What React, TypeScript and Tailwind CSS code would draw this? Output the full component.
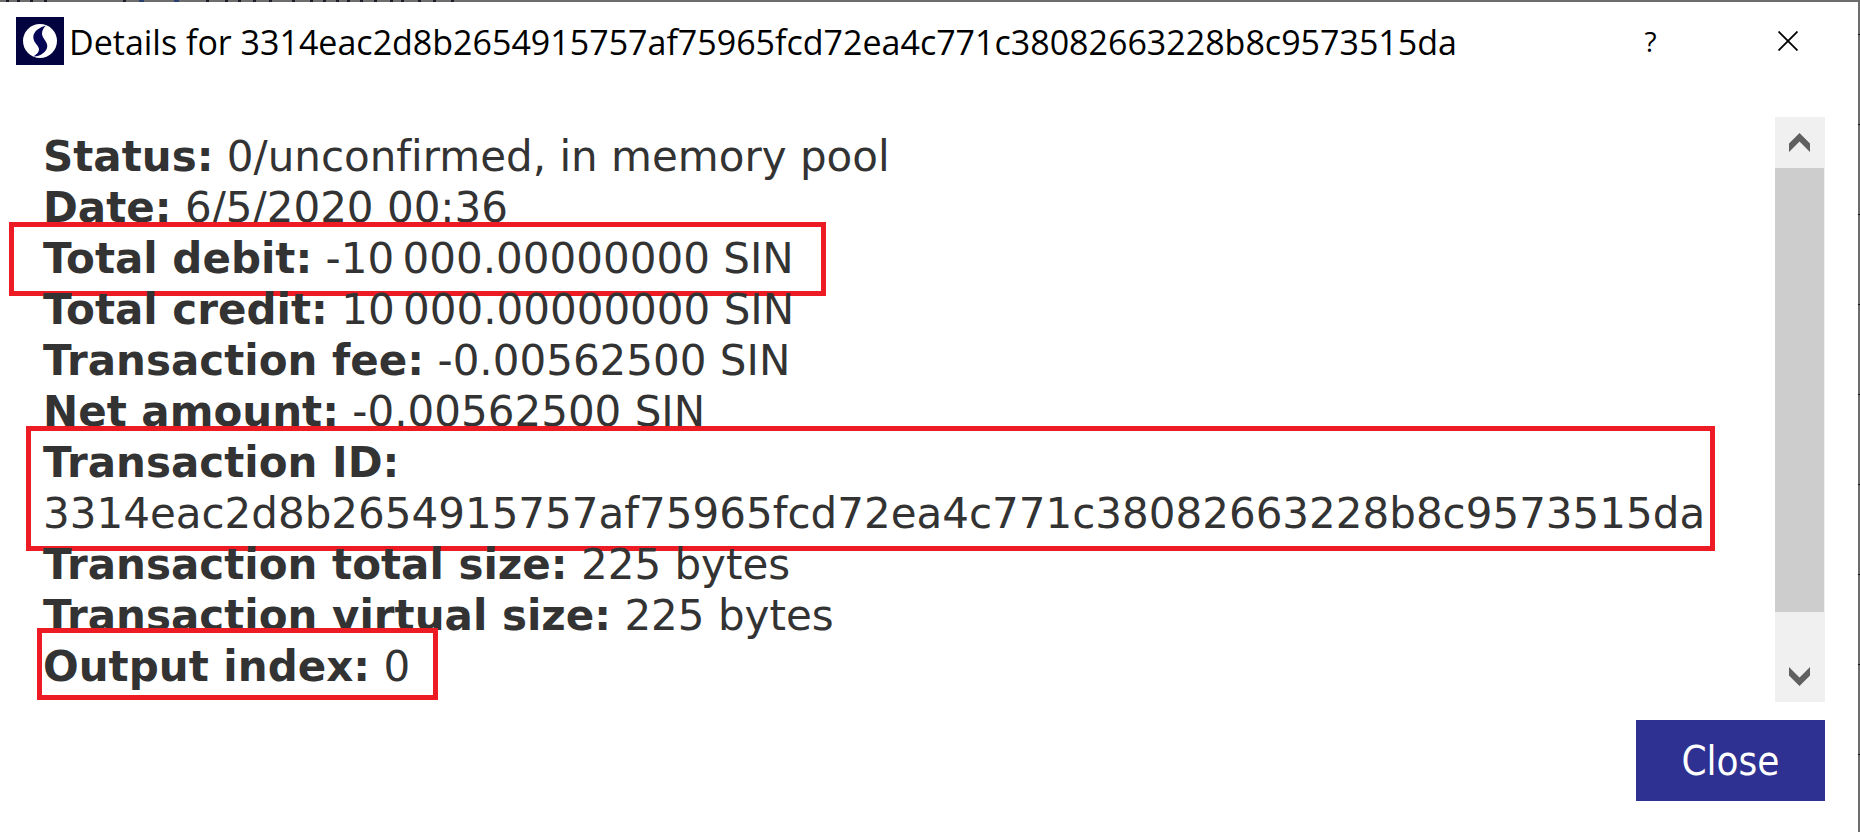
import type { ReactNode } from "react";

type Row = { label: string; value: string; mark?: string };

const txid = "3314eac2d8b2654915757af75965fcd72ea4c771c38082663228b8c9573515da";

const rows: Row[] = [
  { label: "Status:", value: "0/unconfirmed, in memory pool" },
  { label: "Date:", value: "6/5/2020 00:36" },
  { label: "Total debit:", value: "-10\u2009000.00000000 SIN", mark: "-left-[34px] -right-8 -top-[11px] -bottom-3" },
  { label: "Total credit:", value: "10\u2009000.00000000 SIN" },
  { label: "Transaction fee:", value: "-0.00562500 SIN" },
  { label: "Net amount:", value: "-0.00562500 SIN" },
  { label: "Transaction ID:", value: txid, mark: "-left-[17px] right-15 -top-[11px] -bottom-3" },
  { label: "Transaction total size:", value: "225 bytes" },
  { label: "Transaction virtual size:", value: "225 bytes" },
  { label: "Output index:", value: "0", mark: "-left-[6px] -right-7 -top-[13px] -bottom-2" },
];

/* Tips of the letters of the window behind that stick out above the dialog. */
const darkTips = [6, 17, 30, 44, 123, 206, 225, 238, 253, 269, 292, 310, 323, 336, 347, 360, 374, 390, 401, 418, 433, 451];
const blueTips = [139, 174];

function BackdropStrip() {
  return (
    <svg className="h-0.5 w-full shrink-0" aria-hidden="true">
      {darkTips.map((x) => (
        <rect key={x} x={x} y="0" width="3" height="2" fill="#1c1c28" />
      ))}
      {blueTips.map((x) => (
        <rect key={x} x={x} y="0" width="5" height="2" fill="#2b3f70" />
      ))}
    </svg>
  );
}

function Logo() {
  return (
    <svg className="size-12 shrink-0" viewBox="0 0 48 48" aria-hidden="true">
      <rect width="48" height="48" fill="#03033f" />
      <circle cx="24" cy="24" r="17" fill="#fff" />
      <path d="M30 8.500C24.500 10 17.300 14 17.300 20 17.300 26 23 28.500 23 32.500 23 35.500 20 37.500 17.500 39.500 24.500 39.500 31.300 34.500 31.300 29 31.300 24 26 21.500 26 16.500 26 13 28 10.500 30 8.500Z" fill="#050558" />
    </svg>
  );
}

function Chevron({ down }: { down?: boolean }) {
  return (
    <svg width="21" height="19" viewBox="0 0 21 19" fill="#606060" aria-hidden="true">
      {down ? <path d="M0 0 10.500 10.500 21 0V8.500L10.500 19 0 8.500Z" /> : <path d="M0 19 10.500 8.500 21 19V10.500L10.500 0 0 10.500Z" />}
    </svg>
  );
}

function IconButton({ label, children }: { label: string; children: ReactNode }) {
  return (
    <button type="button" aria-label={label} className="flex h-[78px] w-[137px] items-center justify-center">
      {children}
    </button>
  );
}

export default function App() {
  return (
    <div className="flex min-h-screen flex-col bg-[#6d6d6d]">
      <BackdropStrip />
      <div className="flex grow">
        <section className="flex min-w-0 grow flex-col bg-white">
          <header className="flex h-[78px] items-center pr-0.5 pl-4">
            <Logo />
            <h1 className="grow pt-0.5 pl-[5px] font-['Open_Sans'] text-[34px] leading-[48px] whitespace-nowrap text-black">Details for {txid}</h1>
            <IconButton label="Help">
              <span className="font-['Open_Sans'] text-[28px] leading-8">?</span>
            </IconButton>
            <IconButton label="Close window">
              <svg width="20" height="20" viewBox="0 0 20 20" stroke="#000" strokeWidth="1.800" aria-hidden="true">
                <path d="M.5.5l19 19M19.500.500l-19 19" />
              </svg>
            </IconButton>
          </header>
          <main className="mt-[37px] mr-[33px] ml-[43px] flex">
            <ul className="grow pt-[14px] font-['DejaVu_Sans'] text-[42px] leading-[51px] text-[#333] [font-variant-ligatures:none]">
              {rows.map((row) => (
                <li key={row.label}>
                  <div className="relative w-fit">
                    <strong className="font-bold">{row.label}</strong> {row.value}
                    {row.mark && <span className={`pointer-events-none absolute border-[5px] border-[#ed1c24] ${row.mark}`} />}
                  </div>
                </li>
              ))}
            </ul>
            <div className="flex h-[585px] w-[50px] shrink-0 flex-col bg-[#f0f0f0]">
              <button type="button" aria-label="Scroll up" className="mr-px flex h-[51px] items-center justify-center">
                <Chevron />
              </button>
              <div className="mr-px h-[444px] bg-[#cdcdcd]" />
              <button type="button" aria-label="Scroll down" className="mt-auto mr-px flex h-[51px] items-center justify-center">
                <Chevron down />
              </button>
            </div>
          </main>
          <footer className="mt-[18px] mr-[33px] flex justify-end">
            <button type="button" className="h-[81px] w-[189px] bg-[#2e3192] font-['DejaVu_Sans_Condensed'] text-[40px] leading-[48px] text-white">
              Close
            </button>
          </footer>
        </section>
        <div className="w-0.5 shrink-0 bg-[repeating-linear-gradient(#6d6d6d_0_32px,#111_32px_33px,#6d6d6d_33px_90px)]" />
      </div>
    </div>
  );
}
